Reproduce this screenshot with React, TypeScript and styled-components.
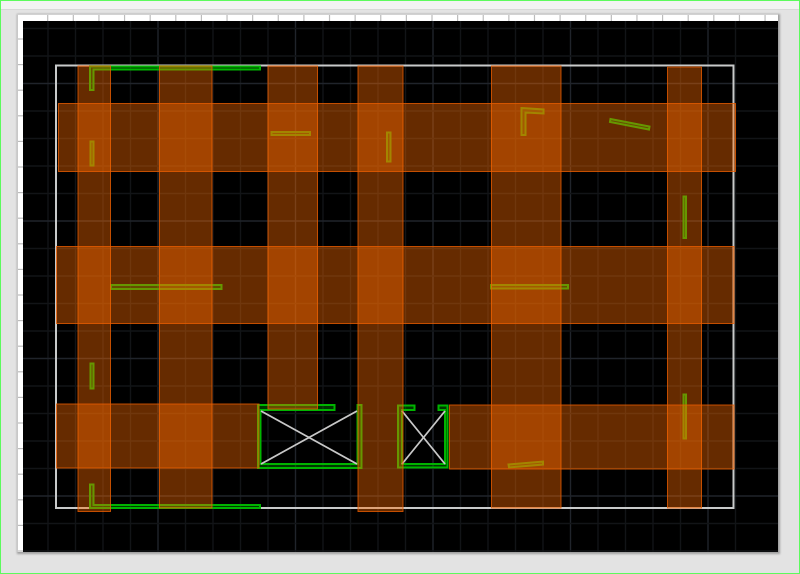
import React from "react";
import styled, { createGlobalStyle } from "styled-components";

const Global = createGlobalStyle`
  html, body { margin: 0; padding: 0; background: #e3e3e3; }
  #root { width: 800px; height: 574px; }
`;

const Frame = styled.div`
  box-sizing: border-box;
  width: 800px;
  height: 574px;
  border: 1px solid #5dfb5d;
  background: #e3e3e3;
  display: flex;
  flex-direction: column;
  overflow: hidden;
`;

const TitleStrip = styled.div`
  height: 8px;
  flex: none;
  background: #f3f3f3;
  border-bottom: 1px solid #d8d8d8;
`;

const Sheet = styled.div`
  margin: 4px 21px 0 16px;
  width: 760px;
  height: 537px;
  display: grid;
  grid-template-columns: 5px 755px;
  grid-template-rows: 6px 531px;
  background: #fff;
  border-top: 1px solid #d2d2d2;
  border-left: 1px solid #c8c8c8;
  box-shadow: 1px 1px 2px 1px rgba(0, 0, 0, 0.3);
`;

const Corner = styled.div`
  background: #fff;
`;

const TopRuler = styled.svg`
  display: block;
  width: 755px;
  height: 6px;
`;

const LeftRuler = styled.svg`
  display: block;
  width: 5px;
  height: 531px;
`;

const Canvas = styled.svg`
  display: block;
  width: 755px;
  height: 531px;
  background: #000;
  filter: blur(0.45px);
`;

type Rect = { x: number; y: number; w: number; h: number };

const bands: Rect[] = [
  { x: 78, y: 66, w: 32.5, h: 445.5 },
  { x: 159.5, y: 66, w: 52.5, h: 442 },
  { x: 268, y: 66, w: 49.5, h: 343 },
  { x: 358, y: 66, w: 45, h: 445.5 },
  { x: 491.5, y: 66, w: 69.5, h: 442 },
  { x: 667.5, y: 67, w: 34, h: 441 },
  { x: 58.5, y: 103.5, w: 677, h: 68 },
  { x: 56.5, y: 246.5, w: 677.5, h: 77 },
  { x: 56.5, y: 404, w: 202.5, h: 64 },
  { x: 449.5, y: 405, w: 284.5, h: 64 },
];

const walls: string[] = [
  "90,66.5 260,66.5 260,69.5 93.5,69.5 93.5,90 90,90",
  "90.5,141.5 93.5,141.5 93.5,165.5 90.5,165.5",
  "271.5,132 310,132 310,135 271.5,135",
  "387,132.5 390.5,132.5 390.5,161.5 387,161.5",
  "521.5,108 543.5,109.5 543.5,113.5 525.5,112.5 525.5,135 521.5,135",
  "610.5,119 649.5,126.5 649,129.5 610,122",
  "683.5,196.5 686,196.5 686,238 683.5,238",
  "111,285 221.5,285 221.5,289 111,289",
  "491,285 568,285 568,288.5 491,288.5",
  "90.5,363.5 93.5,363.5 93.5,388.5 90.5,388.5",
  "683.5,394.5 686,394.5 686,438.5 683.5,438.5",
  "508.5,464.5 543,461.5 543,464.5 509,467.5",
  "90,484.5 93.5,484.5 93.5,505 260,505 260,508 90,508",
  "258,405 334.5,405 334.5,410 260.5,410 260.5,464 357.5,464 357.5,405 361.5,405 361.5,468 258,468",
  "398,405.5 414.5,405.5 414.5,410 402,410 402,464 445,464 445,410 438.5,410 438.5,405.5 447.5,405.5 447.5,467.5 398,467.5",
];

const braces: [number, number, number, number][] = [
  [261, 411, 357, 464],
  [261, 464, 357, 411],
  [402, 411, 445, 464],
  [402, 464, 445, 411],
];

const minorX = Array.from({ length: 27 }, (_, i) => 20.5 + 27.5 * i);
const minorY = Array.from({ length: 20 }, (_, i) => 28.5 + 27.5 * i);
const isMajorX = (i: number) => i % 5 === 0;
const isMajorY = (i: number) => (i + 3) % 5 === 0;
const topTicks = Array.from({ length: 30 }, (_, i) => 24.7 + 25.62 * i);
const leftTicks = Array.from({ length: 21 }, (_, i) => 18 + 25.6 * i);

export default function App() {
  return (
    <>
      <Global />
      <Frame>
        <TitleStrip />
        <Sheet>
          <Corner />
          <TopRuler viewBox="0 0 755 6">
            {topTicks.map((x) => (
              <line key={x} x1={x} x2={x} y1={0} y2={6} stroke="#bcbcbc" strokeWidth="1.2" />
            ))}
          </TopRuler>
          <LeftRuler viewBox="0 0 5 531">
            {leftTicks.map((y) => (
              <line key={y} x1={0} x2={5} y1={y} y2={y} stroke="#bcbcbc" strokeWidth="1.2" />
            ))}
          </LeftRuler>
          <Canvas viewBox="23 21 755 531">
            <g strokeWidth="1.4">
              {minorX.map((x, i) => (
                <line key={x} x1={x} x2={x} y1={21} y2={552} stroke={isMajorX(i) ? "#20242b" : "#121417"} />
              ))}
              {minorY.map((y, i) => (
                <line key={y} x1={23} x2={778} y1={y} y2={y} stroke={isMajorY(i) ? "#20242b" : "#121417"} />
              ))}
            </g>
            <rect x="56" y="65.5" width="677.5" height="442.5" fill="none" stroke="#c8caca" strokeWidth="2" />
            {walls.map((p) => (
              <polygon key={p} points={p} fill="#008a00" fillOpacity="0.4" stroke="#00b400" strokeWidth="2" />
            ))}
            {braces.map(([x1, y1, x2, y2]) => (
              <line key={`${x1}-${y1}`} x1={x1} y1={y1} x2={x2} y2={y2} stroke="#c8c8c8" strokeWidth="1.8" />
            ))}
            {bands.map((b) => (
              <rect
                key={`${b.x}-${b.y}`}
                x={b.x}
                y={b.y}
                width={b.w}
                height={b.h}
                fill="#ff6c00"
                fillOpacity="0.4"
                stroke="#e85c00"
                strokeOpacity="0.8"
                strokeWidth="1"
              />
            ))}
          </Canvas>
        </Sheet>
      </Frame>
    </>
  );
}
